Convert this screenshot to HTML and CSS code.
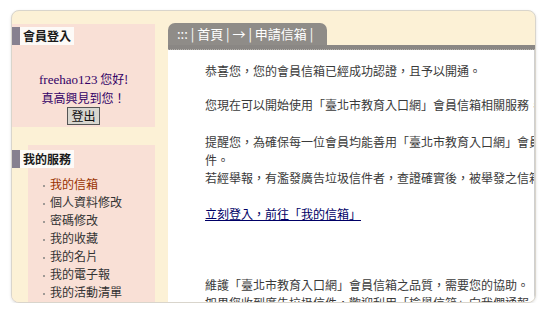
FILE: index.html
```html
<!DOCTYPE html>
<html lang="zh-Hant">
<head>
<meta charset="utf-8">
<title>會員信箱</title>
<link rel="stylesheet" href="styles.css">
</head>
<body>
<div class="frame">
  <div class="side">
    <div class="login">
      <div class="head"><span class="bar"></span><span class="label">會員登入</span></div>
      <div class="greet">
        <div><span class="name">freehao123</span> 您好!</div>
        <div>真高興見到您！</div>
      </div>
      <div class="btnrow"><button class="btn">登出</button></div>
    </div>
    <div class="svc">
      <div class="head head-out"><span class="bar"></span><span class="label">我的服務</span></div>
      <ul class="menu">
        <li class="cur">我的信箱</li>
        <li>個人資料修改</li>
        <li>密碼修改</li>
        <li>我的收藏</li>
        <li>我的名片</li>
        <li>我的電子報</li>
        <li>我的活動清單</li>
      </ul>
    </div>
  </div>
  <div class="main">
    <div class="tab">::: | 首頁 | → | 申請信箱 |</div>
    <div class="rule"></div>
    <div class="content">
      <p class="p1">恭喜您，您的會員信箱已經成功認證，且予以開通。</p>
      <p class="p2">您現在可以開始使用「臺北市教育入口網」會員信箱相關服務，並享有更多的便利。</p>
      <p class="p3">提醒您，為確保每一位會員均能善用「臺北市教育入口網」會員信箱服務，請勿發送廣告垃圾信<br>件。<br>若經舉報，有濫發廣告垃圾信件者，查證確實後，被舉發之信箱將予以停權。</p>
      <p class="p4"><a class="go" href="#">立刻登入，前往「我的信箱」</a></p>
      <p class="p5">維護「臺北市教育入口網」會員信箱之品質，需要您的協助。<br>如果您收到廣告垃圾信件，歡迎利用「檢舉信箱」向我們通報。</p>
    </div>
  </div>
</div>
</body>
</html>
```

FILE: styles.css
```css
html, body {
  margin: 0;
  padding: 0;
  background: #ffffff;
}
body {
  font-family: "Noto Sans CJK TC", "Liberation Sans", sans-serif;
  font-size: 12px;
  color: #333;
}
.frame {
  margin: 10px 0 0 11px;
  width: 523px;
  height: 291px;
  border: 1px solid #d9d5cc;
  border-radius: 8px;
  background: #fcf1d6;
  overflow: hidden;
  display: flex;
  gap: 13px;
  box-shadow: 0 1px 3px rgba(0, 0, 0, 0.12);
}
.side {
  width: 143px;
  flex: none;
  padding-top: 13px;
}
.login {
  background: #f9e0d6;
  height: 103px;
  padding-top: 3px;
  box-sizing: border-box;
}
.head {
  display: flex;
  height: 18px;
  line-height: 18px;
}
.bar {
  width: 8px;
  background: #878190;
}
.label {
  background: #fdfaf7;
  color: #1a1a1a;
  font-weight: bold;
  padding: 0 3px 0 3px;
  font-size: 12px;
}
.greet {
  margin-top: 25px;
  text-align: center;
  line-height: 18px;
  color: #330066;
  font-size: 12px;
}
.name {
  font-family: "Liberation Serif", "Noto Sans CJK TC", serif;
  font-size: 13px;
}
.btnrow {
  text-align: center;
}
.btn {
  font-family: "Noto Sans CJK TC", sans-serif;
  font-size: 12px;
  line-height: 14px;
  height: 18px;
  padding: 0 3px;
  margin: 0;
  background: #d8d6cf;
  border: 1px solid #555;
  color: #111;
  border-radius: 0;
}
.svc {
  margin-top: 18px;
  background: #f9e0d6;
  border-left: 16px solid #fcf1d6;
  padding-top: 5px;
  height: 200px;
}
.head-out {
  margin-left: -16px;
}
.menu {
  list-style: none;
  margin: 7px 0 0 0;
  padding: 0 0 0 15px;
  line-height: 18px;
}
.menu li {
  color: #333;
  white-space: nowrap;
}
.menu li::before {
  content: "";
  display: inline-block;
  width: 2px;
  height: 2px;
  background: #a09a96;
  margin-right: 5px;
  vertical-align: middle;
}
.menu li.cur {
  color: #993300;
}
.main {
  flex: 1;
  min-width: 0;
  padding-top: 12px;
  display: flex;
  flex-direction: column;
}
.tab {
  align-self: flex-start;
  background: #8f8c88;
  color: #fff;
  font-size: 13px;
  height: 22px;
  line-height: 22px;
  padding: 0 14px 0 9px;
  border-radius: 7px 7px 0 0;
  white-space: nowrap;
}
.rule {
  height: 4px;
  background: #8a8784;
  border-bottom: 1px dotted #b5b2ad;
}
.content {
  flex: 1;
  background: #ffffff;
  border-right: 1px solid #cfcfcf;
  padding: 12px 0 0 37px;
  overflow: hidden;
  white-space: nowrap;
  line-height: 18px;
  color: #3a3a3a;
}
.content p {
  margin: 0;
}
.p2 { margin-top: 16px !important; }
.p3 { margin-top: 19px !important; }
.p4 { margin-top: 18px !important; }
.p5 { margin-top: 53px !important; }
.go {
  color: #000066;
  text-decoration: underline;
}
```
